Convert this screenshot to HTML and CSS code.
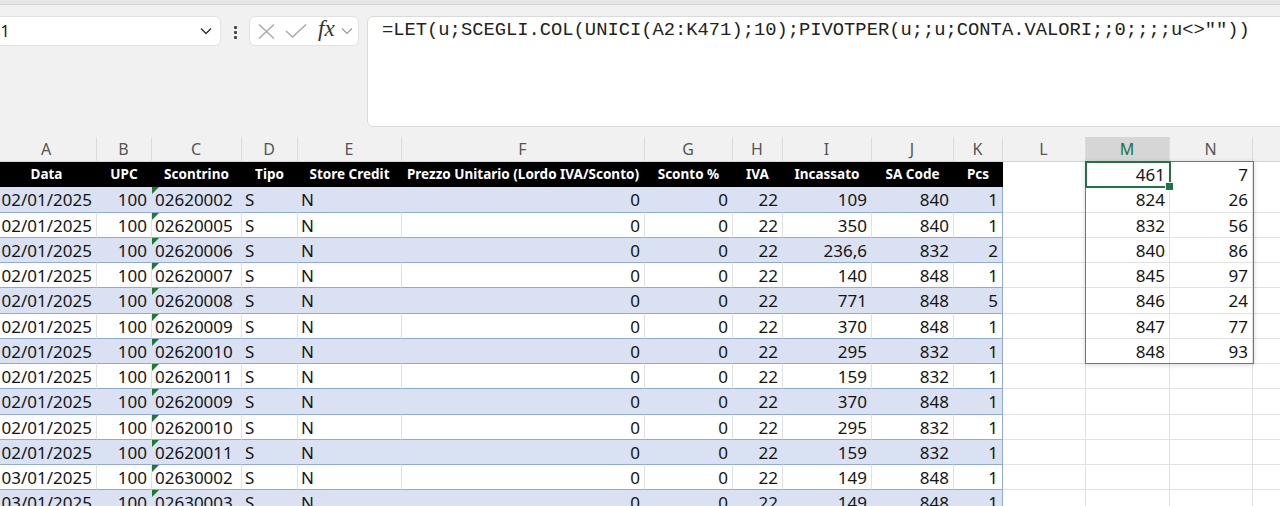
FILE: index.html
```html
<!DOCTYPE html>
<html lang="it">
<head>
    <meta charset="UTF-8">
    <title>Foglio1 - Excel</title>
    <link rel="stylesheet" href="styles.css">
</head>
<body>
<div class="top-strip"></div>
<div class="bar">
    <div class="namebox">
        <span>M1</span>
        <svg class="chev" width="12" height="8" viewBox="0 0 12 8"><path d="M1 1.5 L6 6.5 L11 1.5" fill="none" stroke="#333" stroke-width="1.4"/></svg>
    </div>
    <div class="dots"><i></i><i></i><i></i></div>
    <div class="fxbox">
        <svg width="17" height="15" viewBox="0 0 17 15"><path d="M1 0.5 L16 14.5 M16 0.5 L1 14.5" stroke="#a8a8a8" stroke-width="1.4"/></svg>
        <svg width="22" height="14" viewBox="0 0 22 14"><path d="M1 7 L7.5 13 L21 0.5" fill="none" stroke="#a8a8a8" stroke-width="1.4"/></svg>
        <span class="fx">fx</span>
        <svg width="12" height="8" viewBox="0 0 12 8"><path d="M1 1.5 L6 6.5 L11 1.5" fill="none" stroke="#9a9a9a" stroke-width="1.2"/></svg>
    </div>
    <div class="formula">=LET(u;SCEGLI.COL(UNICI(A2:K471);10);PIVOTPER(u;;u;CONTA.VALORI;;0;;;;u&lt;&gt;""))</div>
</div>
<div class="sheet" id="sheet"></div>

<script>
    // the last column (O) is only partly on screen, its letter is off the edge
    var letters = ["A","B","C","D","E","F","G","H","I","J","K","L","M","N",""];
    var heads = ["Data","UPC","Scontrino","Tipo","Store Credit","Prezzo Unitario (Lordo IVA/Sconto)","Sconto %","IVA","Incassato","SA Code","Pcs"];
    var left = [2,3,4]; // C D E are text
    var data = [
        ["02/01/2025","100","02620002","S","N","0","0","22","109","840","1"],
        ["02/01/2025","100","02620005","S","N","0","0","22","350","840","1"],
        ["02/01/2025","100","02620006","S","N","0","0","22","236,6","832","2"],
        ["02/01/2025","100","02620007","S","N","0","0","22","140","848","1"],
        ["02/01/2025","100","02620008","S","N","0","0","22","771","848","5"],
        ["02/01/2025","100","02620009","S","N","0","0","22","370","848","1"],
        ["02/01/2025","100","02620010","S","N","0","0","22","295","832","1"],
        ["02/01/2025","100","02620011","S","N","0","0","22","159","832","1"],
        ["02/01/2025","100","02620009","S","N","0","0","22","370","848","1"],
        ["02/01/2025","100","02620010","S","N","0","0","22","295","832","1"],
        ["02/01/2025","100","02620011","S","N","0","0","22","159","832","1"],
        ["03/01/2025","100","02630002","S","N","0","0","22","149","848","1"],
        ["03/01/2025","100","02630003","S","N","0","0","22","149","848","1"]
    ];
    var spill = [["461","7"],["824","26"],["832","56"],["840","86"],["845","97"],["846","24"],["847","77"],["848","93"]];

    var sheet = document.getElementById("sheet");
    var html = '<div class="row colhead">';
    letters.forEach(function (l) {
        html += '<div class="cell' + (l == "M" ? ' active' : '') + '">' + l + '</div>';
    });
    html += '</div>';

    for (var r = 0; r <= data.length; r++) {
        var vals = r == 0 ? heads : data[r - 1];
        var cls = r == 0 ? "head" : (r % 2 ? "blue" : "plain");
        html += '<div class="row ' + cls + '">';
        for (var c = 0; c < 15; c++) {
            var txt = "", k = "cell";
            if (c < 11) {
                txt = vals[c];
                k += " t";
                if (c == 10) k += " last";
                if (r > 0 && left.indexOf(c) >= 0) k += " txt";
                if (r > 0 && c == 2) k += " warn";
            }
            if ((c == 12 || c == 13) && r < spill.length) txt = spill[r][c - 12];
            if (r == 0 && c == 12) {
                k += " m1";
                txt = '<span class="spill"></span><span class="sel"></span>' + txt;
            }
            html += '<div class="' + k + '">' + txt + '</div>';
        }
        html += '</div>';
    }
    sheet.innerHTML = html;
</script>
</body>
</html>
```

FILE: styles.css
```css
* {
    box-sizing: border-box;
}
body {
    margin: 0;
    height: 506px;
    overflow: hidden;
    background: #f1f1f1;
    font-family: "Noto Sans", sans-serif;
}

.top-strip {
    height: 5px;
    background: #e6e6e6;
    border-bottom: 1px solid #d4d4d4;
}

/* name box + formula bar */
.bar {
    display: flex;
    align-items: flex-start;
    height: 122px;
    padding-top: 11px;
}
.namebox {
    display: flex;
    align-items: center;
    justify-content: space-between;
    width: 241px;
    height: 30px;
    margin-left: -20px;
    padding: 0 8px 0 5px;
    background: #fff;
    border: 1px solid #e2e2e2;
    border-radius: 6px;
    font-size: 16px;
    color: #222;
}
.dots {
    display: flex;
    flex-direction: column;
    gap: 2px;
    width: 28px;
    align-items: center;
    padding-top: 10px;
}
.dots i {
    width: 3px;
    height: 3px;
    background: #444;
    border-radius: 1px;
}
.fxbox {
    display: flex;
    align-items: center;
    width: 110px;
    height: 30px;
    padding: 0 3px 0 8px;
    gap: 10px;
    background: #fff;
    border: 1px solid #e2e2e2;
    border-radius: 6px;
}
.fxbox .fx {
    font-family: "Liberation Serif", serif;
    font-style: italic;
    font-size: 23px;
    color: #333;
    margin: -4px -4px 0 1px;
}
.formula {
    flex: 1;
    height: 111px;
    margin: 0 -12px 0 8px;
    padding: 2px 14px;
    background: #fff;
    border: 1px solid #dadada;
    border-radius: 6px;
    font-family: "Liberation Mono", monospace;
    font-size: 18.8px;
    line-height: 22px;
    color: #222;
    white-space: nowrap;
}

/* grid */
.sheet {
    margin: 10px 0 0 -3px;
}
.row {
    display: grid;
    grid-template-columns: 100px 55px 90px 56px 104px 243px 88px 50px 89px 82px 49px 83px 84px 83px 83px;
    height: 25.25px;
}
.cell {
    position: relative;
    padding: 0 4px 0 3px;
    background: #fff;
    border-right: 1px solid #e1e1e1;
    border-bottom: 1px solid #e1e1e1;
    font-size: 17px;
    line-height: 25px;
    color: #151515;
    text-align: right;
    white-space: nowrap;
    overflow: hidden;
}

.colhead {
    height: 25px;
}
.colhead .cell {
    background: #f1f1f1;
    border-right-color: #dcdcdc;
    border-bottom-color: #d4d4d4;
    text-align: center;
    font-size: 16px;
    color: #555;
}
.colhead .active {
    background: #d6d6d6;
    color: #217346;
}

.head .t {
    background: #000;
    border-color: #000;
    color: #fff;
    font-weight: bold;
    font-size: 13.5px;
    line-height: 24px;
    text-align: center;
    padding: 0;
}
.blue .t {
    background: #d9e1f2;
    border-right-color: #d9e1f2;
}
.blue .t, .plain .t {
    border-bottom-color: #8ea9db;
}
.blue .last, .plain .last {
    border-right-color: #8ea9db;
}
.txt {
    text-align: left;
}
.warn::before {
    content: "";
    position: absolute;
    left: 0;
    top: 0;
    border-top: 7px solid #1c7a30;
    border-right: 7px solid transparent;
}

/* selected cell and spill range */
.m1 {
    overflow: visible;
}
.spill {
    position: absolute;
    z-index: 2;
    left: -1px;
    top: -1px;
    width: 169px;
    height: 203px;
    border: 1px solid #5677bd;
    box-shadow: 0 1px 5px rgba(0, 0, 0, 0.16);
}
.sel {
    position: absolute;
    z-index: 3;
    left: -1px;
    top: -1px;
    width: 86px;
    height: 27px;
    border: 2px solid #217346;
}
.sel::after {
    content: "";
    position: absolute;
    right: -5px;
    bottom: -5px;
    width: 7px;
    height: 7px;
    background: #217346;
    border: 1px solid #fff;
}
```
